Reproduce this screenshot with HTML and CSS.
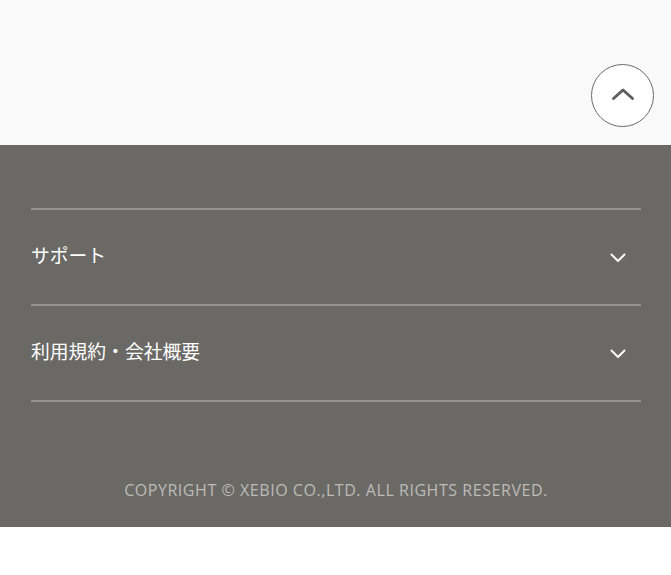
FILE: index.html
```html
<!DOCTYPE html>
<html lang="ja">
<head>
<meta charset="utf-8">
<link rel="stylesheet" href="styles.css">
</head>
<body>
<div class="top">
  <button class="totop" aria-label="ページトップへ">
    <svg width="24" height="14" viewBox="0 0 24 14"><path d="M2.5 11.5 L12 3 L21.5 11.5" fill="none" stroke="#5f5f5f" stroke-width="3" stroke-linecap="round" stroke-linejoin="round"/></svg>
  </button>
</div>
<footer class="footer">
  <ul class="menu">
    <li class="item"><span>サポート</span>
      <svg class="chev" width="16" height="10" viewBox="0 0 16 10"><path d="M1.5 1.5 L8 8 L14.5 1.5" fill="none" stroke="#fff" stroke-width="2" stroke-linecap="round" stroke-linejoin="round"/></svg>
    </li>
    <li class="item"><span>利用規約・会社概要</span>
      <svg class="chev" width="16" height="10" viewBox="0 0 16 10"><path d="M1.5 1.5 L8 8 L14.5 1.5" fill="none" stroke="#fff" stroke-width="2" stroke-linecap="round" stroke-linejoin="round"/></svg>
    </li>
  </ul>
  <p class="copy">COPYRIGHT © XEBIO CO.,LTD. ALL RIGHTS RESERVED.</p>
</footer>
</body>
</html>
```

FILE: styles.css
```css
html, body {
  margin: 0;
  padding: 0;
  background: #ffffff;
}
body {
  font-family: "Noto Sans CJK JP", "Noto Sans", sans-serif;
}
.top {
  height: 145px;
  background: #f9f9f9;
  display: flex;
  justify-content: flex-end;
  align-items: flex-start;
  padding-right: 17px;
  box-sizing: border-box;
}
.totop {
  margin-top: 64px;
  width: 63px;
  height: 63px;
  border-radius: 50%;
  border: 1.5px solid #6a6a6a;
  background: #fff;
  display: flex;
  align-items: center;
  justify-content: center;
  padding: 0 0 3px 0;
  box-sizing: border-box;
}
.footer {
  background: #6b6966;
  padding: 63px 30px 0 31px;
  height: 382px;
  box-sizing: border-box;
}
.menu {
  list-style: none;
  margin: 0;
  padding: 0;
  border-top: 2px solid #949290;
}
.item {
  height: 94px;
  border-bottom: 2px solid #949290;
  display: flex;
  align-items: center;
  justify-content: space-between;
  color: #fff;
  font-size: 18.8px;
  padding-right: 15px;
}
.item span {
  margin-top: -5px;
}
.chev {
  display: block;
  margin-top: 2px;
}
.copy {
  margin: 77px 0 0 0;
  text-align: center;
  font-family: "Open Sans", "Liberation Sans", sans-serif;
  font-size: 16px;
  color: #bdbbb8;
  letter-spacing: 0.55px;
}
```
